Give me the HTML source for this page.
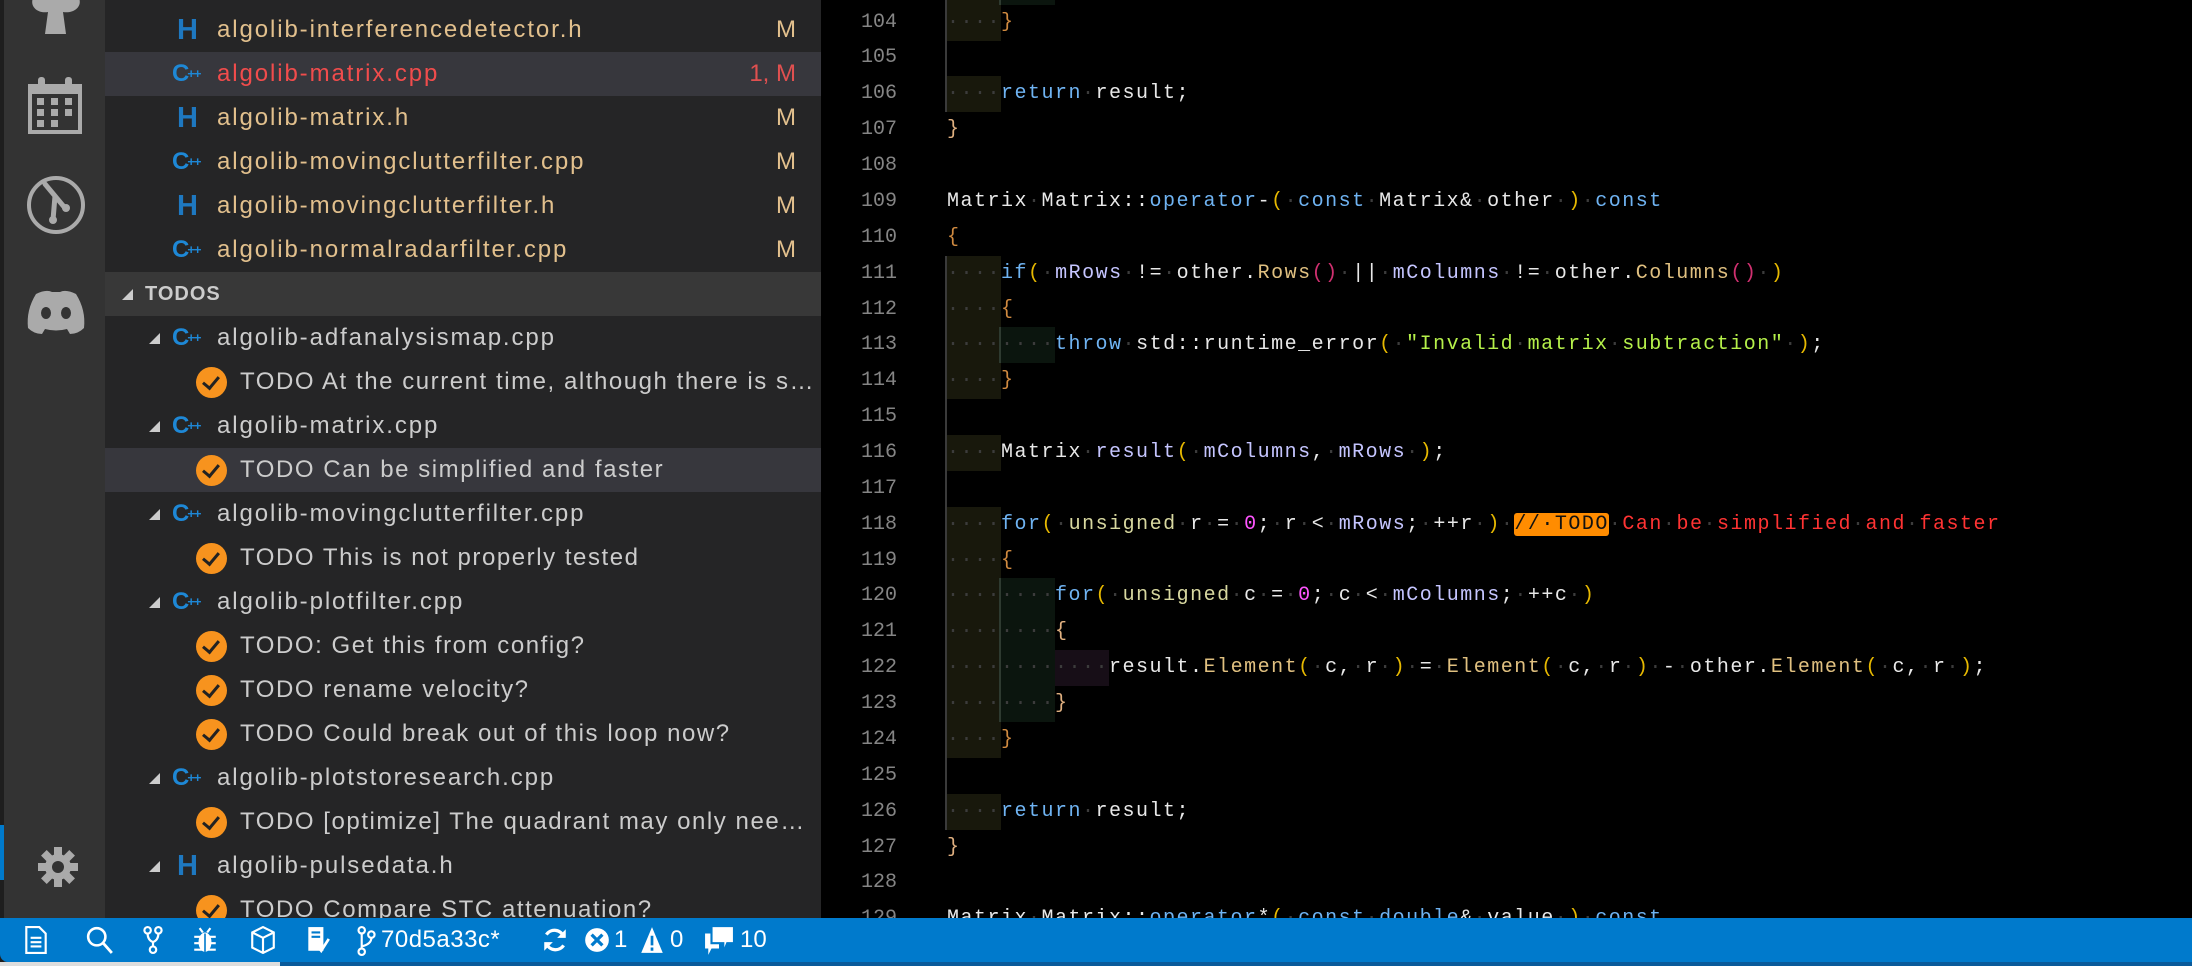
<!DOCTYPE html>
<html><head><meta charset="utf-8"><style>
*{margin:0;padding:0;box-sizing:border-box}
body{width:2192px;height:966px;overflow:hidden;background:#000;position:relative;font-family:"Liberation Sans",sans-serif}
#act{position:absolute;left:0;top:0;width:105px;height:966px;background:#333;border-left:4px solid #1e1e1e}
#side{position:absolute;left:105px;top:0;width:716px;height:966px;background:#252526;overflow:hidden}
.r{position:absolute;left:0;width:716px;height:44px;font-size:24px;letter-spacing:1.9px;line-height:44px;color:#ccc;white-space:nowrap}
.r .t{position:absolute;left:112px}
.r .tt{position:absolute;left:135px;width:578px;overflow:hidden;text-overflow:ellipsis;letter-spacing:1.55px}
.r .m{position:absolute;right:25px;color:#e2c08d;letter-spacing:0}
.mod{color:#e2c08d}
.sel{background:#37373d}
.hI{position:absolute;left:72px;top:0;color:#1e78c0;font-weight:bold;font-size:29px;letter-spacing:0}
.cI{position:absolute;left:67px;top:0;color:#1e88d6;font-weight:bold;font-size:24px;letter-spacing:-2px}
.cI small{font-size:13px;vertical-align:3px;letter-spacing:-1px}
.ar{position:absolute;left:44px;top:17px;width:0;height:0;border-left:11px solid transparent;border-bottom:11px solid #ccc}
.ck{position:absolute;left:91px;top:7px;width:31px;height:31px;border-radius:50%;background:#f7931e}
.ck:after{content:"";position:absolute;left:10px;top:6px;width:7px;height:13px;border:solid #222;border-width:0 3px 3px 0;transform:rotate(40deg)}
#ed{position:absolute;left:821px;top:0;width:1371px;height:966px;background:#000;overflow:hidden}
.l{position:absolute;left:0;height:36px;line-height:36px;white-space:pre;font-family:"Liberation Mono",monospace;font-size:20px;letter-spacing:1.5px;color:#e8e8e8}
.n{position:absolute;left:0;width:76px;text-align:right;color:#858585;font-family:"Liberation Mono",monospace;font-size:20px;letter-spacing:0}
.c{position:absolute;left:126px;height:36px}
.g1{background:#18180c;border-left:2px solid #3a3a3a;margin-left:-2px;display:inline-block;height:36px}
.g2{background:#0b150e;border-left:2px solid #2e3a30;margin-left:-2px;display:inline-block;height:36px}
.g3{background:#170e17;display:inline-block;height:36px}
.e{display:inline-block;border-left:2px solid #3a3a3a;height:36px;margin-left:-2px}
.d{color:#3c3c3c}
.k{color:#6fb3f2}.v{color:#c5c5ff}.f{color:#e0c080}.u{color:#d8d8a0}.num{color:#ff55ff}.s{color:#b5f04a}
.p{color:#e6b800}.q{color:#d03070}.b{color:#d08a40}.b2{color:#e0b080}
.todo{background:#ff8c00;color:#111;border-radius:3px}
.red{color:#ff3333}
#st{position:absolute;left:0;top:918px;width:2192px;height:44px;background:#007acc;color:#fff;font-size:24px;border-bottom-left-radius:8px}
#bot{position:absolute;left:0;top:962px;width:2192px;height:4px;background:#0a5a9a}
#bot:before{content:"";position:absolute;left:0;top:0;width:280px;height:4px;background:#ddd}
#st svg{position:absolute;top:8px}
#st span{position:absolute;top:0;line-height:44px}
</style></head><body>
<div id="act">
<svg style="position:absolute;left:24px;top:0" width="56" height="36" viewBox="0 0 56 36"><path d="M6 -4 C0 6 10 14 20 12 L17 34 L38 34 L35 12 C46 14 56 6 50 -4 Z" fill="#aaa"/></svg>
<svg style="position:absolute;left:22px;top:76px" width="58" height="60" viewBox="0 0 58 60"><rect x="2" y="8" width="54" height="50" fill="#aaa"/><rect x="6" y="18" width="46" height="36" fill="#333"/><rect x="12" y="1" width="7" height="13" rx="3" fill="#aaa"/><rect x="39" y="1" width="7" height="13" rx="3" fill="#aaa"/><g fill="#aaa"><rect x="11" y="22" width="7" height="7"/><rect x="25" y="22" width="7" height="7"/><rect x="39" y="22" width="7" height="7"/><rect x="11" y="33" width="7" height="7"/><rect x="25" y="33" width="7" height="7"/><rect x="39" y="33" width="7" height="7"/><rect x="11" y="44" width="7" height="7"/><rect x="25" y="44" width="7" height="7"/></g></svg>
<svg style="position:absolute;left:21px;top:174px" width="62" height="62" viewBox="0 0 62 62"><circle cx="31" cy="31" r="27" fill="none" stroke="#aaa" stroke-width="4"/><path d="M20 10 L30 22 L28 46 M30 22 L40 34" stroke="#aaa" stroke-width="5" fill="none" stroke-linecap="round"/><circle cx="28" cy="46" r="4" fill="#aaa"/><circle cx="41" cy="34" r="4" fill="#aaa"/></svg>
<svg style="position:absolute;left:20px;top:288px" width="64" height="48" viewBox="0 0 64 48"><path d="M12 6 Q22 1 28 4 L36 4 Q42 1 52 6 Q62 22 60 40 Q54 46 46 46 L43 41 Q32 44 21 41 L18 46 Q10 46 4 40 Q2 22 12 6 Z" fill="#aaa"/><ellipse cx="22" cy="25" rx="5" ry="6" fill="#333"/><ellipse cx="42" cy="25" rx="5" ry="6" fill="#333"/></svg>
<svg style="position:absolute;left:33px;top:846px" width="42" height="42" viewBox="0 0 42 42"><g fill="#aaa" transform="translate(21 21)"><circle r="13"/><rect x="-4" y="-20" width="8" height="40"/><rect x="-4" y="-20" width="8" height="40" transform="rotate(45)"/><rect x="-4" y="-20" width="8" height="40" transform="rotate(90)"/><rect x="-4" y="-20" width="8" height="40" transform="rotate(135)"/></g><circle cx="21" cy="21" r="6" fill="#333"/></svg>
<div style="position:absolute;left:-4px;top:825px;width:4px;height:55px;background:#007acc"></div>
</div>
<div id="side">
<div class="r" style="top:-36px"><span class="cI">C<small>++</small></span><span class="t mod">algolib-interactiveradar.cpp</span><span class="m">M</span></div>
<div class="r" style="top:8px"><span class="hI">H</span><span class="t mod">algolib-interferencedetector.h</span><span class="m">M</span></div>
<div class="r sel" style="top:52px"><span class="cI">C<small>++</small></span><span class="t" style="color:#f14c4c">algolib-matrix.cpp</span><span class="m" style="color:#e05050">1, M</span></div>
<div class="r" style="top:96px"><span class="hI">H</span><span class="t mod">algolib-matrix.h</span><span class="m">M</span></div>
<div class="r" style="top:140px"><span class="cI">C<small>++</small></span><span class="t mod">algolib-movingclutterfilter.cpp</span><span class="m">M</span></div>
<div class="r" style="top:184px"><span class="hI">H</span><span class="t mod">algolib-movingclutterfilter.h</span><span class="m">M</span></div>
<div class="r" style="top:228px"><span class="cI">C<small>++</small></span><span class="t mod">algolib-normalradarfilter.cpp</span><span class="m">M</span></div>
<div class="r" style="top:272px;background:#383838;font-size:20px;letter-spacing:1px;font-weight:bold;color:#ccc"><span style="position:absolute;left:17px;top:17px;width:0;height:0;border-left:11px solid transparent;border-bottom:11px solid #ccc"></span><span style="position:absolute;left:40px">TODOS</span></div>
<div class="r" style="top:316px"><span class="ar"></span><span class="cI">C<small>++</small></span><span class="t">algolib-adfanalysismap.cpp</span></div>
<div class="r" style="top:360px"><span class="ck"></span><span class="tt">TODO At the current time, although there is some</span></div>
<div class="r" style="top:404px"><span class="ar"></span><span class="cI">C<small>++</small></span><span class="t">algolib-matrix.cpp</span></div>
<div class="r sel" style="top:448px"><span class="ck"></span><span class="tt">TODO Can be simplified and faster</span></div>
<div class="r" style="top:492px"><span class="ar"></span><span class="cI">C<small>++</small></span><span class="t">algolib-movingclutterfilter.cpp</span></div>
<div class="r" style="top:536px"><span class="ck"></span><span class="tt">TODO This is not properly tested</span></div>
<div class="r" style="top:580px"><span class="ar"></span><span class="cI">C<small>++</small></span><span class="t">algolib-plotfilter.cpp</span></div>
<div class="r" style="top:624px"><span class="ck"></span><span class="tt">TODO: Get this from config?</span></div>
<div class="r" style="top:668px"><span class="ck"></span><span class="tt">TODO rename velocity?</span></div>
<div class="r" style="top:712px"><span class="ck"></span><span class="tt">TODO Could break out of this loop now?</span></div>
<div class="r" style="top:756px"><span class="ar"></span><span class="cI">C<small>++</small></span><span class="t">algolib-plotstoresearch.cpp</span></div>
<div class="r" style="top:800px"><span class="ck"></span><span class="tt">TODO [optimize] The quadrant may only need to</span></div>
<div class="r" style="top:844px"><span class="ar"></span><span class="hI">H</span><span class="t">algolib-pulsedata.h</span></div>
<div class="r" style="top:888px"><span class="ck"></span><span class="tt">TODO Compare STC attenuation?</span></div>
</div>
<div id="ed">
<div class="l" style="top:-31px"><span class="n">103</span><span class="c"><span class="g1"><span class="d">····</span></span><span class="g2"><span class="d">····</span></span><span class="b">}</span></span></div>
<div class="l" style="top:4.5px"><span class="n">104</span><span class="c"><span class="g1"><span class="d">····</span></span><span class="b">}</span></span></div>
<div class="l" style="top:40.4px"><span class="n">105</span><span class="c"><span class="e"></span></span></div>
<div class="l" style="top:76.3px"><span class="n">106</span><span class="c"><span class="g1"><span class="d">····</span></span><span class="k">return</span><span class="d">·</span>result;</span></div>
<div class="l" style="top:112.1px"><span class="n">107</span><span class="c"><span class="b2">}</span></span></div>
<div class="l" style="top:148px"><span class="n">108</span></div>
<div class="l" style="top:183.9px"><span class="n">109</span><span class="c">Matrix<span class="d">·</span>Matrix::<span class="k">operator</span>-<span class="p">(</span><span class="d">·</span><span class="k">const</span><span class="d">·</span>Matrix&amp;<span class="d">·</span>other<span class="d">·</span><span class="p">)</span><span class="d">·</span><span class="k">const</span></span></div>
<div class="l" style="top:219.8px"><span class="n">110</span><span class="c"><span class="b">{</span></span></div>
<div class="l" style="top:255.6px"><span class="n">111</span><span class="c"><span class="g1"><span class="d">····</span></span><span class="k">if</span><span class="p">(</span><span class="d">·</span><span class="v">mRows</span><span class="d">·</span>!=<span class="d">·</span>other.<span class="f">Rows</span><span class="q">()</span><span class="d">·</span>||<span class="d">·</span><span class="v">mColumns</span><span class="d">·</span>!=<span class="d">·</span>other.<span class="f">Columns</span><span class="q">()</span><span class="d">·</span><span class="p">)</span></span></div>
<div class="l" style="top:291.5px"><span class="n">112</span><span class="c"><span class="g1"><span class="d">····</span></span><span class="b">{</span></span></div>
<div class="l" style="top:327.4px"><span class="n">113</span><span class="c"><span class="g1"><span class="d">····</span></span><span class="g2"><span class="d">····</span></span><span class="k">throw</span><span class="d">·</span>std::runtime_error<span class="p">(</span><span class="d">·</span><span class="s">"Invalid<span class="d">·</span>matrix<span class="d">·</span>subtraction"</span><span class="d">·</span><span class="p">)</span>;</span></div>
<div class="l" style="top:363.2px"><span class="n">114</span><span class="c"><span class="g1"><span class="d">····</span></span><span class="b">}</span></span></div>
<div class="l" style="top:399.1px"><span class="n">115</span><span class="c"><span class="e"></span></span></div>
<div class="l" style="top:435px"><span class="n">116</span><span class="c"><span class="g1"><span class="d">····</span></span>Matrix<span class="d">·</span><span class="v">result</span><span class="p">(</span><span class="d">·</span><span class="v">mColumns</span>,<span class="d">·</span><span class="v">mRows</span><span class="d">·</span><span class="p">)</span>;</span></div>
<div class="l" style="top:470.8px"><span class="n">117</span><span class="c"><span class="e"></span></span></div>
<div class="l" style="top:506.7px"><span class="n">118</span><span class="c"><span class="g1"><span class="d">····</span></span><span class="k">for</span><span class="p">(</span><span class="d">·</span><span class="u">unsigned</span><span class="d">·</span>r<span class="d">·</span>=<span class="d">·</span><span class="num">0</span>;<span class="d">·</span>r<span class="d">·</span>&lt;<span class="d">·</span><span class="v">mRows</span>;<span class="d">·</span>++r<span class="d">·</span><span class="p">)</span><span class="d">·</span><span class="todo">//·TODO</span><span class="red"><span class="d">·</span>Can<span class="d">·</span>be<span class="d">·</span>simplified<span class="d">·</span>and<span class="d">·</span>faster</span></span></div>
<div class="l" style="top:542.6px"><span class="n">119</span><span class="c"><span class="g1"><span class="d">····</span></span><span class="b">{</span></span></div>
<div class="l" style="top:578.4px"><span class="n">120</span><span class="c"><span class="g1"><span class="d">····</span></span><span class="g2"><span class="d">····</span></span><span class="k">for</span><span class="p">(</span><span class="d">·</span><span class="u">unsigned</span><span class="d">·</span>c<span class="d">·</span>=<span class="d">·</span><span class="num">0</span>;<span class="d">·</span>c<span class="d">·</span>&lt;<span class="d">·</span><span class="v">mColumns</span>;<span class="d">·</span>++c<span class="d">·</span><span class="p">)</span></span></div>
<div class="l" style="top:614.3px"><span class="n">121</span><span class="c"><span class="g1"><span class="d">····</span></span><span class="g2"><span class="d">····</span></span><span class="b2">{</span></span></div>
<div class="l" style="top:650.2px"><span class="n">122</span><span class="c"><span class="g1"><span class="d">····</span></span><span class="g2"><span class="d">····</span></span><span class="g3"><span class="d">····</span></span>result.<span class="f">Element</span><span class="p">(</span><span class="d">·</span>c,<span class="d">·</span>r<span class="d">·</span><span class="p">)</span><span class="d">·</span>=<span class="d">·</span><span class="f">Element</span><span class="p">(</span><span class="d">·</span>c,<span class="d">·</span>r<span class="d">·</span><span class="p">)</span><span class="d">·</span>-<span class="d">·</span>other.<span class="f">Element</span><span class="p">(</span><span class="d">·</span>c,<span class="d">·</span>r<span class="d">·</span><span class="p">)</span>;</span></div>
<div class="l" style="top:686px"><span class="n">123</span><span class="c"><span class="g1"><span class="d">····</span></span><span class="g2"><span class="d">····</span></span><span class="b2">}</span></span></div>
<div class="l" style="top:721.9px"><span class="n">124</span><span class="c"><span class="g1"><span class="d">····</span></span><span class="b">}</span></span></div>
<div class="l" style="top:757.8px"><span class="n">125</span><span class="c"><span class="e"></span></span></div>
<div class="l" style="top:793.6px"><span class="n">126</span><span class="c"><span class="g1"><span class="d">····</span></span><span class="k">return</span><span class="d">·</span>result;</span></div>
<div class="l" style="top:829.5px"><span class="n">127</span><span class="c"><span class="b2">}</span></span></div>
<div class="l" style="top:865.4px"><span class="n">128</span></div>
<div class="l" style="top:901.2px"><span class="n">129</span><span class="c">Matrix<span class="d">·</span>Matrix::<span class="k">operator</span>*<span class="p">(</span><span class="d">·</span><span class="k">const</span><span class="d">·</span><span class="k">double</span>&amp;<span class="d">·</span>value<span class="d">·</span><span class="p">)</span><span class="d">·</span><span class="k">const</span></span></div>
</div>
<div id="st">
<svg style="left:24px" width="24" height="28" viewBox="0 0 22 26"><path d="M2 1 H14 L20 7 V25 H2 Z" fill="none" stroke="#fff" stroke-width="2"/><path d="M6 11H16M6 15H16M6 19H16" stroke="#fff" stroke-width="2"/></svg>
<svg style="left:86px" width="28" height="28" viewBox="0 0 26 26"><circle cx="10" cy="10" r="8" fill="none" stroke="#fff" stroke-width="2.4"/><path d="M16 16 L24 25" stroke="#fff" stroke-width="2.6"/></svg>
<svg style="left:143px" width="20" height="28" viewBox="0 0 18 26"><circle cx="4" cy="4" r="3" fill="none" stroke="#fff" stroke-width="2"/><circle cx="14" cy="4" r="3" fill="none" stroke="#fff" stroke-width="2"/><circle cx="9" cy="22" r="3" fill="none" stroke="#fff" stroke-width="2"/><path d="M4 7 Q4 13 9 15 V19 M14 7 Q14 13 9 15" fill="none" stroke="#fff" stroke-width="2"/></svg>
<svg style="left:193px" width="24" height="28" viewBox="0 0 22 26"><ellipse cx="11" cy="15" rx="6" ry="9" fill="#fff"/><path d="M1 10H21M1 16H21M1 22H21M6 2L9 6M16 2L13 6" stroke="#fff" stroke-width="2"/><path d="M11 7V24" stroke="#007acc" stroke-width="1.5"/></svg>
<svg style="left:250px" width="26" height="28" viewBox="0 0 24 26"><path d="M2 6 L12 1 L22 6 V20 L12 25 L2 20 Z M2 6 L12 11 L22 6 M12 11 V25" fill="none" stroke="#fff" stroke-width="2"/></svg>
<svg style="left:306px" width="24" height="28" viewBox="0 0 22 26"><rect x="2" y="1" width="14" height="22" fill="#fff"/><path d="M5 6H13M5 10H13" stroke="#007acc" stroke-width="2"/><path d="M10 18 L14 23 L21 12" fill="none" stroke="#fff" stroke-width="2.5"/></svg>
<svg style="left:356px" width="20" height="30" viewBox="0 0 18 28"><circle cx="5" cy="4" r="3" fill="none" stroke="#fff" stroke-width="2"/><circle cx="5" cy="24" r="3" fill="none" stroke="#fff" stroke-width="2"/><circle cx="14" cy="8" r="3" fill="none" stroke="#fff" stroke-width="2"/><path d="M5 7V21M14 11 Q14 17 5 19" fill="none" stroke="#fff" stroke-width="2"/></svg>
<span style="left:381px;letter-spacing:0.5px">70d5a33c*</span>
<svg style="left:542px" width="26" height="28" viewBox="0 0 24 26"><path d="M20 10 A9 9 0 0 0 4 8 M4 16 A9 9 0 0 0 20 18" fill="none" stroke="#fff" stroke-width="3"/><path d="M22 3 V11 H14 Z M2 23 V15 H10 Z" fill="#fff"/></svg>
<svg style="left:584px" width="26" height="28" viewBox="0 0 24 26"><circle cx="12" cy="13" r="11" fill="#fff"/><path d="M7 8 L17 18 M17 8 L7 18" stroke="#007acc" stroke-width="3"/></svg>
<span style="left:614px">1</span>
<svg style="left:640px" width="24" height="28" viewBox="0 0 22 26"><path d="M11 1 L21 25 H1 Z" fill="#fff"/><path d="M11 9V18M11 20V23" stroke="#007acc" stroke-width="2.5"/></svg>
<span style="left:670px">0</span>
<svg style="left:704px" width="30" height="30" viewBox="0 0 28 28"><path d="M8 1 H27 V15 H21 L19 20 V15 H8 Z" fill="#fff"/><path d="M1 7 H6 V17 H14 V21 H7 L4 27 V21 H1 Z" fill="#fff"/></svg>
<span style="left:740px">10</span>
</div>
<div id="bot"></div>
</body></html>
